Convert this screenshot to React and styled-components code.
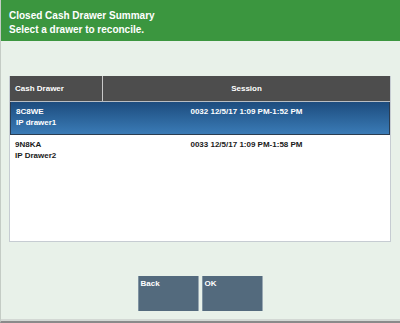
import React from "react";
import styled, { createGlobalStyle } from "styled-components";

const Global = createGlobalStyle`
  html, body { margin: 0; padding: 0; }
  body { font-family: "Liberation Sans", Arial, sans-serif; }
`;

const Screen = styled.div`
  width: 400px;
  height: 323px;
  box-sizing: border-box;
  background: #e8f1e9;
  border-left: 1px solid #c4ccc5;
  border-bottom: 2px solid #8a8a8a;
  box-shadow: inset 0 -2px 0 #d3d8d4;
  display: flex;
  flex-direction: column;
`;

const Header = styled.div`
  height: 41px;
  box-sizing: border-box;
  background: #3b963f;
  color: #fff;
  font-weight: bold;
  font-size: 10px;
  line-height: 14px;
  padding: 9px 8px 0;
`;

const Body = styled.div`
  padding: 35px 9px 0 8px;
  display: flex;
  flex-direction: column;
`;

const Table = styled.div`
  width: 382px;
  height: 166px;
  box-sizing: border-box;
  background: #fff;
  border: 1px solid #c6ccd2;
  border-top: none;
`;

const HeadRow = styled.div`
  display: grid;
  grid-template-columns: 93px 1fr;
  height: 25px;
  background: #4d4d4d;
  border-bottom: 1px solid #b9bec4;
  color: #fff;
  font-weight: bold;
  font-size: 8px;
`;

const HeadCell = styled.div`
  display: flex;
  align-items: center;
  justify-content: ${p => (p.$center ? "center" : "flex-start")};
  padding-left: ${p => (p.$center ? "0" : "5px")};
  border-right: ${p => (p.$divider ? "1px solid #c9c9c9" : "none")};
`;

const Row = styled.div`
  display: grid;
  grid-template-columns: 93px 1fr;
  height: 33px;
  box-sizing: border-box;
  font-weight: bold;
  font-size: 8px;
  line-height: 11px;
  color: ${p => (p.$selected ? "#fff" : "#1a1a1a")};
  background: ${p =>
    p.$selected ? "linear-gradient(#1d4c7e, #3a7bb6)" : "#fff"};
  border: ${p => (p.$selected ? "1px solid #2a3c50" : "none")};
  border-top: none;
  padding-top: 4px;
`;

const Cell = styled.div`
  padding-left: ${p => (p.$center ? "0" : "5px")};
  text-align: ${p => (p.$center ? "center" : "left")};
`;

const Buttons = styled.div`
  display: flex;
  justify-content: center;
  gap: 3px;
  margin-top: 34px;
`;

const Button = styled.div`
  width: 61px;
  height: 35px;
  box-sizing: border-box;
  background: #536a7d;
  border-right: 1px solid #9aa9b3;
  border-left: 1px solid #7f93a1;
  color: #fff;
  font-weight: bold;
  font-size: 8px;
  padding: 3px 2px;
`;

const rows = [
  { id: "8C8WE", name: "IP drawer1", session: "0032 12/5/17 1:09 PM-1:52 PM", selected: true },
  { id: "9N8KA", name: "IP Drawer2", session: "0033 12/5/17 1:09 PM-1:58 PM" },
];

export default function App() {
  return (
    <>
      <Global />
      <Screen>
        <Header>
          Closed Cash Drawer Summary
          <br />
          Select a drawer to reconcile.
        </Header>
        <Body>
          <Table>
            <HeadRow>
              <HeadCell $divider>Cash Drawer</HeadCell>
              <HeadCell $center>Session</HeadCell>
            </HeadRow>
            {rows.map(r => (
              <Row key={r.id} $selected={r.selected}>
                <Cell>
                  {r.id}
                  <br />
                  {r.name}
                </Cell>
                <Cell $center>{r.session}</Cell>
              </Row>
            ))}
          </Table>
          <Buttons>
            <Button>Back</Button>
            <Button>OK</Button>
          </Buttons>
        </Body>
      </Screen>
    </>
  );
}
